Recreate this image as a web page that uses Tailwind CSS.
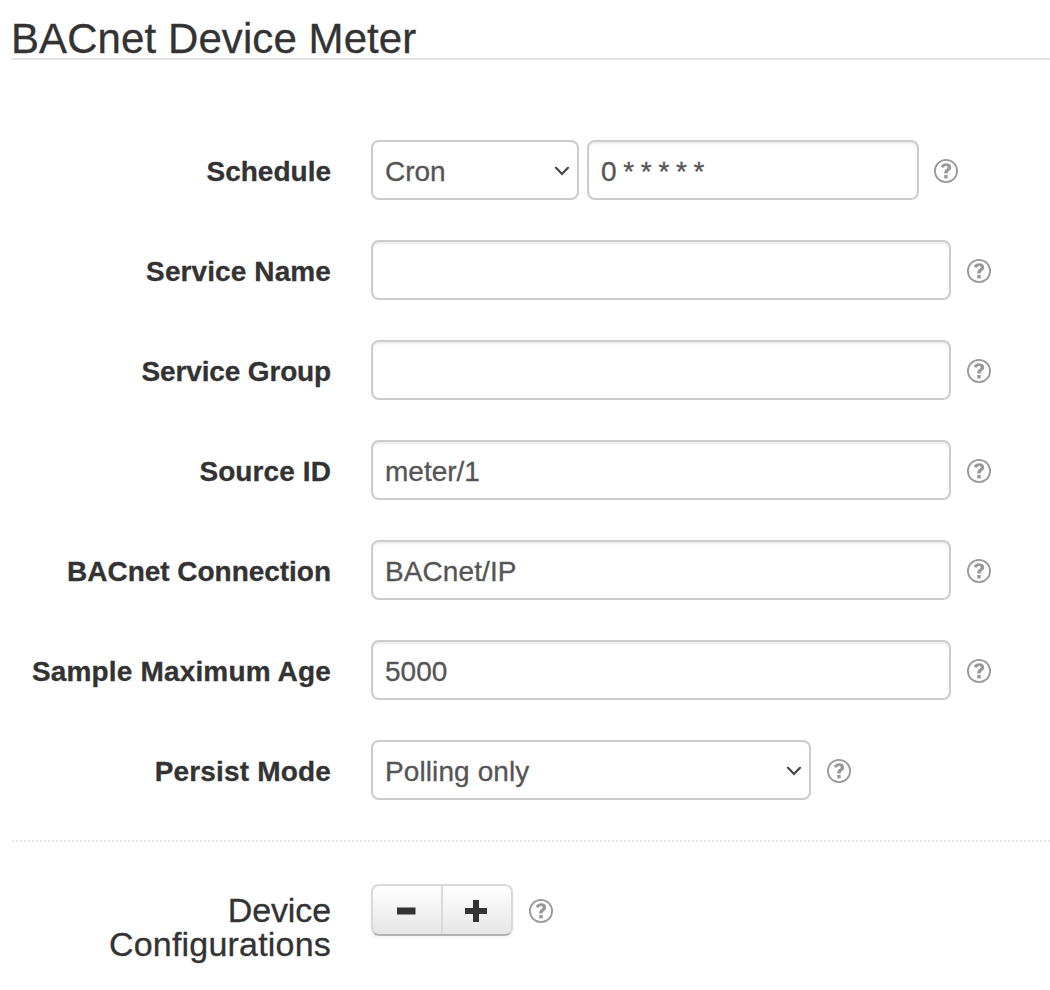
<!DOCTYPE html>
<html lang="en">
<head>
<meta charset="utf-8">
<title>BACnet Device Meter</title>
<script src="https://cdn.jsdelivr.net/npm/@tailwindcss/browser@4"></script>
</head>
<body class="h-[990px] overflow-hidden bg-white font-['Liberation_Sans',Arial,sans-serif] text-[28px] text-[#333333] [-webkit-text-stroke:0.3px]">
<svg class="hidden">
  <symbol id="help" viewBox="0 0 24 24">
    <circle cx="12" cy="12" r="11.100" fill="none" stroke="#999" stroke-width="1.800"/>
    <path d="M6.700 7.500C7.900 5.200 9.700 4.300 12.200 4.300c2.800 0 5 1.500 5 4.100 0 1.800-.9 2.700-2.100 3.500-1.100.8-1.400 1.200-1.400 2.600h-3.500c0-2.500.6-3.500 2.100-4.500.9-.6 1.300-.9 1.300-1.600 0-.8-.6-1.300-1.500-1.300-1.200 0-1.900.7-2.700 1.900z" fill="#999"/>
    <path d="M10.200 16h3.500v3.400h-3.500z" fill="#999"/>
  </symbol>
  <symbol id="chevron" viewBox="0 0 16 10">
    <path d="M2 1.800L8 7.900L14 1.800" fill="none" stroke="#444" stroke-width="2.200" stroke-linecap="round" stroke-linejoin="miter"/>
  </symbol>
</svg>
<header class="ml-[11px] h-[60px] border-b-2 border-[#e5e5e5] pt-[18px]">
  <h1 class="whitespace-nowrap text-[42px] leading-[42px] tracking-[0.08px]">BACnet Device Meter</h1>
</header>
<main>
  <form class="mt-20 flex flex-col gap-10">
    <div class="flex h-[60px] items-center">
      <label class="mr-10 w-[331px] pt-[3px] text-right font-bold whitespace-nowrap">Schedule</label>
      <div class="flex h-[60px] w-[208px] items-center justify-between rounded-lg border-2 border-[#cccccc] pr-[7px] pl-3 text-[#555555]"><span class="pt-[3px]">Cron</span><svg class="mt-px h-[10px] w-4"><use href="#chevron"/></svg></div>
      <div class="ml-2 flex h-[60px] w-[332px] items-center rounded-lg border-2 border-[#cccccc] pt-[3px] pl-3 text-[#555555] shadow-[inset_0_2px_2px_rgba(0,0,0,0.075)]"><span class="whitespace-nowrap [word-spacing:-1.1px]">0 * * * * *</span></div>
      <svg class="ml-[15px] size-6 translate-y-px"><use href="#help"/></svg>
    </div>
    <div class="flex h-[60px] items-center">
      <label class="mr-10 w-[331px] pt-[3px] text-right font-bold tracking-[0.1px] whitespace-nowrap">Service Name</label>
      <div class="h-[60px] w-[580px] rounded-lg border-2 border-[#cccccc] shadow-[inset_0_2px_2px_rgba(0,0,0,0.075)]"></div>
      <svg class="ml-4 size-6 translate-y-px"><use href="#help"/></svg>
    </div>
    <div class="flex h-[60px] items-center">
      <label class="mr-10 w-[331px] pt-[3px] text-right font-bold tracking-[-0.15px] whitespace-nowrap">Service Group</label>
      <div class="h-[60px] w-[580px] rounded-lg border-2 border-[#cccccc] shadow-[inset_0_2px_2px_rgba(0,0,0,0.075)]"></div>
      <svg class="ml-4 size-6 translate-y-px"><use href="#help"/></svg>
    </div>
    <div class="flex h-[60px] items-center">
      <label class="mr-10 w-[331px] pt-[3px] text-right font-bold tracking-[0.1px] whitespace-nowrap">Source ID</label>
      <div class="flex h-[60px] w-[580px] items-center rounded-lg border-2 border-[#cccccc] pt-[3px] pl-3 text-[#555555] shadow-[inset_0_2px_2px_rgba(0,0,0,0.075)]">meter/1</div>
      <svg class="ml-4 size-6 translate-y-px"><use href="#help"/></svg>
    </div>
    <div class="flex h-[60px] items-center">
      <label class="mr-10 w-[331px] pt-[3px] text-right font-bold tracking-[-0.03px] whitespace-nowrap">BACnet Connection</label>
      <div class="flex h-[60px] w-[580px] items-center rounded-lg border-2 border-[#cccccc] pt-[3px] pl-3 tracking-[0.1px] text-[#555555] shadow-[inset_0_2px_2px_rgba(0,0,0,0.075)]">BACnet/IP</div>
      <svg class="ml-4 size-6 translate-y-px"><use href="#help"/></svg>
    </div>
    <div class="flex h-[60px] items-center">
      <label class="mr-10 w-[331px] pt-[3px] text-right font-bold tracking-[0.16px] whitespace-nowrap">Sample Maximum Age</label>
      <div class="flex h-[60px] w-[580px] items-center rounded-lg border-2 border-[#cccccc] pt-[3px] pl-3 text-[#555555] shadow-[inset_0_2px_2px_rgba(0,0,0,0.075)]">5000</div>
      <svg class="ml-4 size-6 translate-y-px"><use href="#help"/></svg>
    </div>
    <div class="flex h-[60px] items-center">
      <label class="mr-10 w-[331px] pt-[3px] text-right font-bold tracking-[0.17px] whitespace-nowrap">Persist Mode</label>
      <div class="flex h-[60px] w-[440px] items-center justify-between rounded-lg border-2 border-[#cccccc] pr-[7px] pl-3 text-[#555555]"><span class="pt-[3px] tracking-[0.1px]">Polling only</span><svg class="mt-px h-[10px] w-4"><use href="#chevron"/></svg></div>
      <svg class="ml-4 size-6 translate-y-px"><use href="#help"/></svg>
    </div>
  </form>
  <section class="mt-10 ml-[12px] flex border-t-2 border-dotted border-[#e8e8e8] pt-[42px]">
    <h2 class="mr-10 w-[319px] pt-[9px] text-right text-[34px] leading-[34px]"><span class="block tracking-[-0.1px]">Device</span><span class="block tracking-[0.2px]">Configurations</span></h2>
    <div class="flex h-[52px] w-[142px] rounded-lg border-2 border-[#d9d9d9] border-b-[#b3b3b3] bg-linear-to-b from-white to-[#e6e6e6] shadow-[0_2px_4px_rgba(0,0,0,0.05)]">
      <button class="flex w-[70px] items-center justify-center border-r-2 border-[#d9d9d9] pr-[2px]" type="button" aria-label="Remove"><svg class="h-[22px] w-[22px] translate-y-px"><path d="M2 7.500h18.500v7H2z" fill="#333"/></svg></button>
      <button class="flex w-[68px] items-center justify-center pr-[2px]" type="button" aria-label="Add"><svg class="h-[22px] w-[22px] translate-y-px"><path d="M8 0h6v8h8v6h-8v8H8v-8H0V8h8z" fill="#333"/></svg></button>
    </div>
    <svg class="mt-[15px] ml-4 size-6"><use href="#help"/></svg>
  </section>
</main>
</body>
</html>
